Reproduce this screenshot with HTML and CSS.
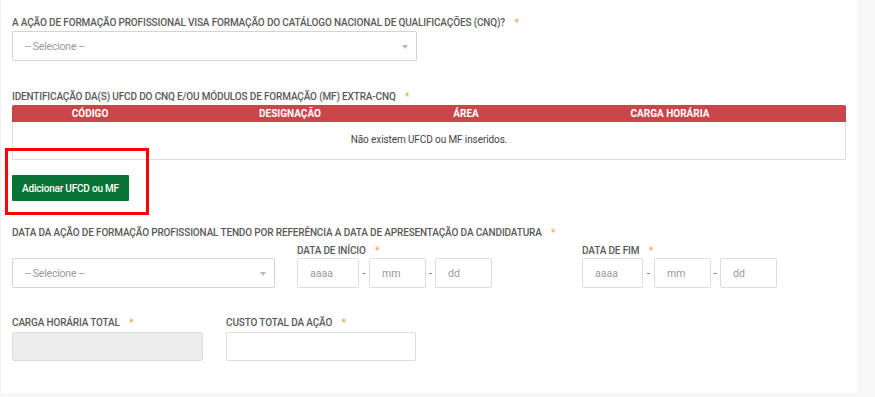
FILE: index.html
```html
<!DOCTYPE html>
<html lang="pt">
<head>
<meta charset="utf-8">
<link rel="stylesheet" href="styles.css">
</head>
<body>
<div class="panel">
  <div class="field first">
    <div class="label">A AÇÃO DE FORMAÇÃO PROFISSIONAL VISA FORMAÇÃO DO CATÁLOGO NACIONAL DE QUALIFICAÇÕES (CNQ)? <span class="req">*</span></div>
    <div class="select wide"><span>-- Selecione --</span><i class="caret"></i></div>
  </div>

  <div class="field sec2">
    <div class="label">IDENTIFICAÇÃO DA(S) UFCD DO CNQ E/OU MÓDULOS DE FORMAÇÃO (MF) EXTRA-CNQ <span class="req">*</span></div>
    <div class="table">
      <div class="thead">
        <div>CÓDIGO</div><div>DESIGNAÇÃO</div><div>ÁREA</div><div>CARGA HORÁRIA</div><div></div>
      </div>
      <div class="tbody">Não existem UFCD ou MF inseridos.</div>
    </div>
  </div>

  <div class="btnrow">
    <button class="btn">Adicionar UFCD ou MF</button>
    <div class="highlight"></div>
  </div>

  <div class="field sec3">
    <div class="label">DATA DA AÇÃO DE FORMAÇÃO PROFISSIONAL TENDO POR REFERÊNCIA A DATA DE APRESENTAÇÃO DA CANDIDATURA <span class="req">*</span></div>
    <div class="daterow">
      <div class="col">
        <div class="select"><span>-- Selecione --</span><i class="caret"></i></div>
      </div>
      <div class="col">
        <div class="sublabel">DATA DE INÍCIO <span class="req">*</span></div>
        <div class="dates">
          <div class="inp w62">aaaa</div><span class="dash">-</span><div class="inp w57">mm</div><span class="dash d9">-</span><div class="inp w57">dd</div>
        </div>
      </div>
      <div class="col">
        <div class="sublabel">DATA DE FIM <span class="req">*</span></div>
        <div class="dates">
          <div class="inp w61">aaaa</div><span class="dash d11">-</span><div class="inp w57">mm</div><span class="dash d9">-</span><div class="inp w57">dd</div>
        </div>
      </div>
    </div>
  </div>

  <div class="totals">
    <div class="tcol c1">
      <div class="label">CARGA HORÁRIA TOTAL <span class="req">*</span></div>
      <div class="inp full disabled"></div>
    </div>
    <div class="tcol c2">
      <div class="label">CUSTO TOTAL DA AÇÃO <span class="req">*</span></div>
      <div class="inp full"></div>
    </div>
  </div>
</div>
</body>
</html>
```

FILE: styles.css
```css
* { box-sizing: border-box; }
html, body { margin: 0; padding: 0; }
body {
  background: #f8f8f8;
  font-family: Roboto, "Liberation Sans", sans-serif;
  width: 875px;
  height: 397px;
  overflow: hidden;
}
.panel {
  width: 857px;
  height: 393px;
  background: #fff;
  border-left: 1px solid #f0f0f0;
  padding: 16px 11px 0 11px;
}
.label, .sublabel {
  font-size: 10px;
  letter-spacing: -0.15px;
  line-height: 14px;
  font-weight: 500;
  color: #5a5a5a;
  white-space: nowrap;
}
.req {
  color: #f0ad4e;
  margin-left: 7px;
  font-size: 10px;
}
.field.first .label { margin-bottom: 1px; }
.select {
  position: relative;
  height: 30px;
  border: 1px solid #d4d4d4;
  border-radius: 2px;
  font-size: 10.5px;
  letter-spacing: -0.2px;
  color: #999;
  padding-left: 12px;
  display: flex;
  align-items: center;
}
.select.wide { width: 405px; }
.caret {
  position: absolute;
  right: 8px;
  top: 13px;
  width: 0; height: 0;
  border-left: 3.5px solid transparent;
  border-right: 3.5px solid transparent;
  border-top: 4px solid #bbb;
}
.sec2 { margin-top: 29px; }
.sec2 .label { margin-bottom: 1px; }
.table { width: 834px; }
.thead {
  display: grid;
  grid-template-columns: 156px 244px 108px 300px 1fr;
  background: #c9464b;
  height: 17px;
  align-items: center;
  text-align: center;
  color: #fff;
  font-weight: 700;
  font-size: 10px;
  border-radius: 2px 2px 0 0;
}
.tbody {
  height: 38px;
  border: 1px solid #ddd;
  border-top: none;
  border-radius: 0 0 2px 2px;
  text-align: center;
  font-size: 10px;
  letter-spacing: -0.1px;
  line-height: 36px;
  color: #444;
}
.btnrow {
  position: relative;
  margin-top: 15px;
  height: 26px;
}
.btn {
  height: 26px;
  width: 117px;
  background: #077334;
  color: #fff;
  border: none;
  border-radius: 1px;
  font-family: inherit;
  font-size: 10px;
  letter-spacing: -0.2px;
  font-weight: 500;
  padding: 0;
}
.highlight {
  position: absolute;
  left: -7px;
  top: -27px;
  width: 144px;
  height: 67px;
  border: 3px solid #ff0000;
}
.sec3 { margin-top: 25px; }
.daterow {
  display: grid;
  grid-template-columns: 263px 263px 263px;
  column-gap: 22px;
  margin-top: 4px;
}
.daterow .col:first-child { padding-top: 14px; }
.sublabel { margin-bottom: 0; }
.dates { display: flex; align-items: center; }
.inp {
  height: 30px;
  border: 1px solid #ddd;
  border-radius: 2px;
  font-size: 10.5px;
  color: #999;
  padding-left: 12px;
  display: flex;
  align-items: center;
}
.w62 { width: 62px; }
.w61 { width: 61px; }
.w57 { width: 57px; }
.dash {
  width: 10px;
  text-align: center;
  font-size: 10px;
  color: #555;
}
.dash.d9 { width: 9px; }
.dash.d11 { width: 11px; }
.totals {
  display: flex;
  gap: 23px;
  margin-top: 28px;
}
.tcol .label { margin-bottom: 2px; }
.c1 { width: 191px; }
.c2 { width: 190px; }
.inp.full { width: 100%; height: 29px; }
.inp.disabled { background: #ededed; border-color: #ddd; }
```
